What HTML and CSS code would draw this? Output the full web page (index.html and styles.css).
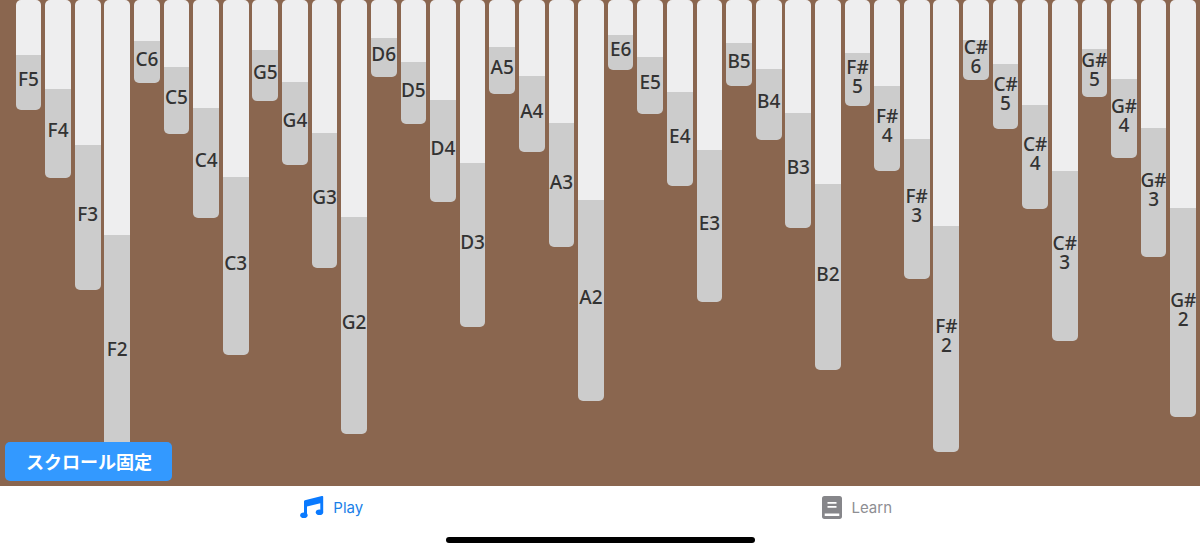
FILE: index.html
```html
<!DOCTYPE html>
<html lang="ja">

<head>
    <meta charset="UTF-8">
    <meta name="viewport" content="width=device-width, initial-scale=1.0">
    <title>Kalimba</title>
    <link rel="stylesheet" href="styles.css">
</head>

<body>
    <div class="board">
        <div class="keys">
            <div class="key"><div class="key-top" style="height:55px"></div><div class="key-note" style="height:55px">F5</div></div>
            <div class="key"><div class="key-top" style="height:89px"></div><div class="key-note" style="height:89px">F4</div></div>
            <div class="key"><div class="key-top" style="height:145px"></div><div class="key-note" style="height:145px">F3</div></div>
            <div class="key"><div class="key-top" style="height:235px"></div><div class="key-note" style="height:234px">F2</div></div>
            <div class="key"><div class="key-top" style="height:41px"></div><div class="key-note" style="height:42px">C6</div></div>
            <div class="key"><div class="key-top" style="height:67px"></div><div class="key-note" style="height:67px">C5</div></div>
            <div class="key"><div class="key-top" style="height:108px"></div><div class="key-note" style="height:110px">C4</div></div>
            <div class="key"><div class="key-top" style="height:177px"></div><div class="key-note" style="height:178px">C3</div></div>
            <div class="key"><div class="key-top" style="height:50px"></div><div class="key-note" style="height:51px">G5</div></div>
            <div class="key"><div class="key-top" style="height:82px"></div><div class="key-note" style="height:83px">G4</div></div>
            <div class="key"><div class="key-top" style="height:133px"></div><div class="key-note" style="height:135px">G3</div></div>
            <div class="key"><div class="key-top" style="height:217px"></div><div class="key-note" style="height:217px">G2</div></div>
            <div class="key"><div class="key-top" style="height:38px"></div><div class="key-note" style="height:39px">D6</div></div>
            <div class="key"><div class="key-top" style="height:62px"></div><div class="key-note" style="height:62px">D5</div></div>
            <div class="key"><div class="key-top" style="height:100px"></div><div class="key-note" style="height:102px">D4</div></div>
            <div class="key"><div class="key-top" style="height:163px"></div><div class="key-note" style="height:164px">D3</div></div>
            <div class="key"><div class="key-top" style="height:47px"></div><div class="key-note" style="height:47px">A5</div></div>
            <div class="key"><div class="key-top" style="height:76px"></div><div class="key-note" style="height:76px">A4</div></div>
            <div class="key"><div class="key-top" style="height:123px"></div><div class="key-note" style="height:124px">A3</div></div>
            <div class="key"><div class="key-top" style="height:200px"></div><div class="key-note" style="height:201px">A2</div></div>
            <div class="key"><div class="key-top" style="height:35px"></div><div class="key-note" style="height:35px">E6</div></div>
            <div class="key"><div class="key-top" style="height:57px"></div><div class="key-note" style="height:57px">E5</div></div>
            <div class="key"><div class="key-top" style="height:92px"></div><div class="key-note" style="height:94px">E4</div></div>
            <div class="key"><div class="key-top" style="height:150px"></div><div class="key-note" style="height:152px">E3</div></div>
            <div class="key"><div class="key-top" style="height:43px"></div><div class="key-note" style="height:43px">B5</div></div>
            <div class="key"><div class="key-top" style="height:69px"></div><div class="key-note" style="height:71px">B4</div></div>
            <div class="key"><div class="key-top" style="height:113px"></div><div class="key-note" style="height:115px">B3</div></div>
            <div class="key"><div class="key-top" style="height:184px"></div><div class="key-note" style="height:186px">B2</div></div>
            <div class="key"><div class="key-top" style="height:53px"></div><div class="key-note" style="height:53px">F#<br>5</div></div>
            <div class="key"><div class="key-top" style="height:86px"></div><div class="key-note" style="height:85px">F#<br>4</div></div>
            <div class="key"><div class="key-top" style="height:139px"></div><div class="key-note" style="height:140px">F#<br>3</div></div>
            <div class="key"><div class="key-top" style="height:226px"></div><div class="key-note" style="height:226px">F#<br>2</div></div>
            <div class="key"><div class="key-top" style="height:40px"></div><div class="key-note" style="height:40px">C#<br>6</div></div>
            <div class="key"><div class="key-top" style="height:64px"></div><div class="key-note" style="height:65px">C#<br>5</div></div>
            <div class="key"><div class="key-top" style="height:105px"></div><div class="key-note" style="height:104px">C#<br>4</div></div>
            <div class="key"><div class="key-top" style="height:171px"></div><div class="key-note" style="height:170px">C#<br>3</div></div>
            <div class="key"><div class="key-top" style="height:49px"></div><div class="key-note" style="height:48px">G#<br>5</div></div>
            <div class="key"><div class="key-top" style="height:79px"></div><div class="key-note" style="height:79px">G#<br>4</div></div>
            <div class="key"><div class="key-top" style="height:128px"></div><div class="key-note" style="height:129px">G#<br>3</div></div>
            <div class="key"><div class="key-top" style="height:208px"></div><div class="key-note" style="height:209px">G#<br>2</div></div>
        </div>
        <button class="scroll-lock">スクロール固定</button>
    </div>

    <div class="tabbar">
        <div class="tab tab-active">
            <svg class="tab-icon" viewBox="0 0 24 23" width="24" height="23">
                <path fill="currentColor" d="M4 5.500c0-.6.300-1 .9-1.200L21.800.1c.8-.2 1.400.2 1.400 1v15h-2.900V7.200L7 10.500V19H4z"/>
                <ellipse fill="currentColor" cx="3.900" cy="19.300" rx="3.700" ry="2.800"/>
                <ellipse fill="currentColor" cx="19.500" cy="16.200" rx="3.700" ry="2.800"/>
            </svg>
            <span>Play</span>
        </div>
        <div class="tab">
            <svg class="tab-icon tab-icon-book" viewBox="0 0 20 23" width="20" height="23">
                <path fill="currentColor" fill-rule="evenodd" d="M2.500 0h15C19.200 0 20 .9 20 2.500v18c0 1.600-.8 2.500-2.500 2.500h-15C.8 23 0 22.100 0 20.500v-18C0 .9.800 0 2.500 0zM5.500 6v1.800h9V6zm0 4v1.800h9V10zM2.700 17.500v2.500h14.600v-2.500z"/>
            </svg>
            <span>Learn</span>
        </div>
        <div class="home-indicator"></div>
    </div>
</body>

</html>
```
FILE: styles.css
```css
* {
    box-sizing: border-box;
}

html,
body {
    height: 100%;
}

body {
    display: flex;
    flex-direction: column;
    margin: 0;
    overflow: hidden;
    font-family: "Noto Sans", "Noto Sans CJK JP", sans-serif;
    background-color: white;
}

.board {
    position: relative;
    height: 486px;
    overflow: hidden;
    background-color: #8a664f;
}

.keys {
    display: flex;
    align-items: flex-start;
    gap: 3.93px;
    padding-left: 15.6px;
}

.key {
    display: flex;
    flex-direction: column;
    flex: 0 0 25.7px;
    overflow: hidden;
    border-radius: 0 0 5px 5px;
}

.key-top {
    border-radius: 5px 5px 0 0;
    background-color: #eeeeef;
}

.key-note {
    display: flex;
    align-items: center;
    justify-content: center;
    padding-bottom: 6px;
    font-size: 19px;
    font-weight: 500;
    line-height: 19px;
    text-align: center;
    color: #333;
    background-color: #cccccc;
}

.scroll-lock {
    position: absolute;
    left: 5px;
    top: 442px;
    width: 167px;
    height: 39px;
    padding: 0 0 2px 1px;
    border: none;
    border-radius: 5px;
    font-family: "Noto Sans CJK JP", sans-serif;
    font-size: 18px;
    font-weight: 700;
    color: white;
    background-color: #3399ff;
}

.tabbar {
    position: relative;
    display: flex;
    flex: 1;
    align-items: flex-start;
    padding: 10px 80px 0 69px;
    background-color: white;
}

.tab {
    display: flex;
    flex: 1;
    align-items: center;
    justify-content: center;
    gap: 9px;
    height: 23px;
    font-family: Inter, sans-serif;
    font-size: 15px;
    color: #8e8e93;
}

.tab-active {
    color: #1a7fe8;
}

.tab-active .tab-icon {
    color: #0a7aff;
}

.tab-icon-book {
    color: #86868a;
}

.home-indicator {
    position: absolute;
    left: 446px;
    bottom: 11px;
    width: 309px;
    height: 6px;
    border-radius: 3px;
    background-color: black;
}
```
